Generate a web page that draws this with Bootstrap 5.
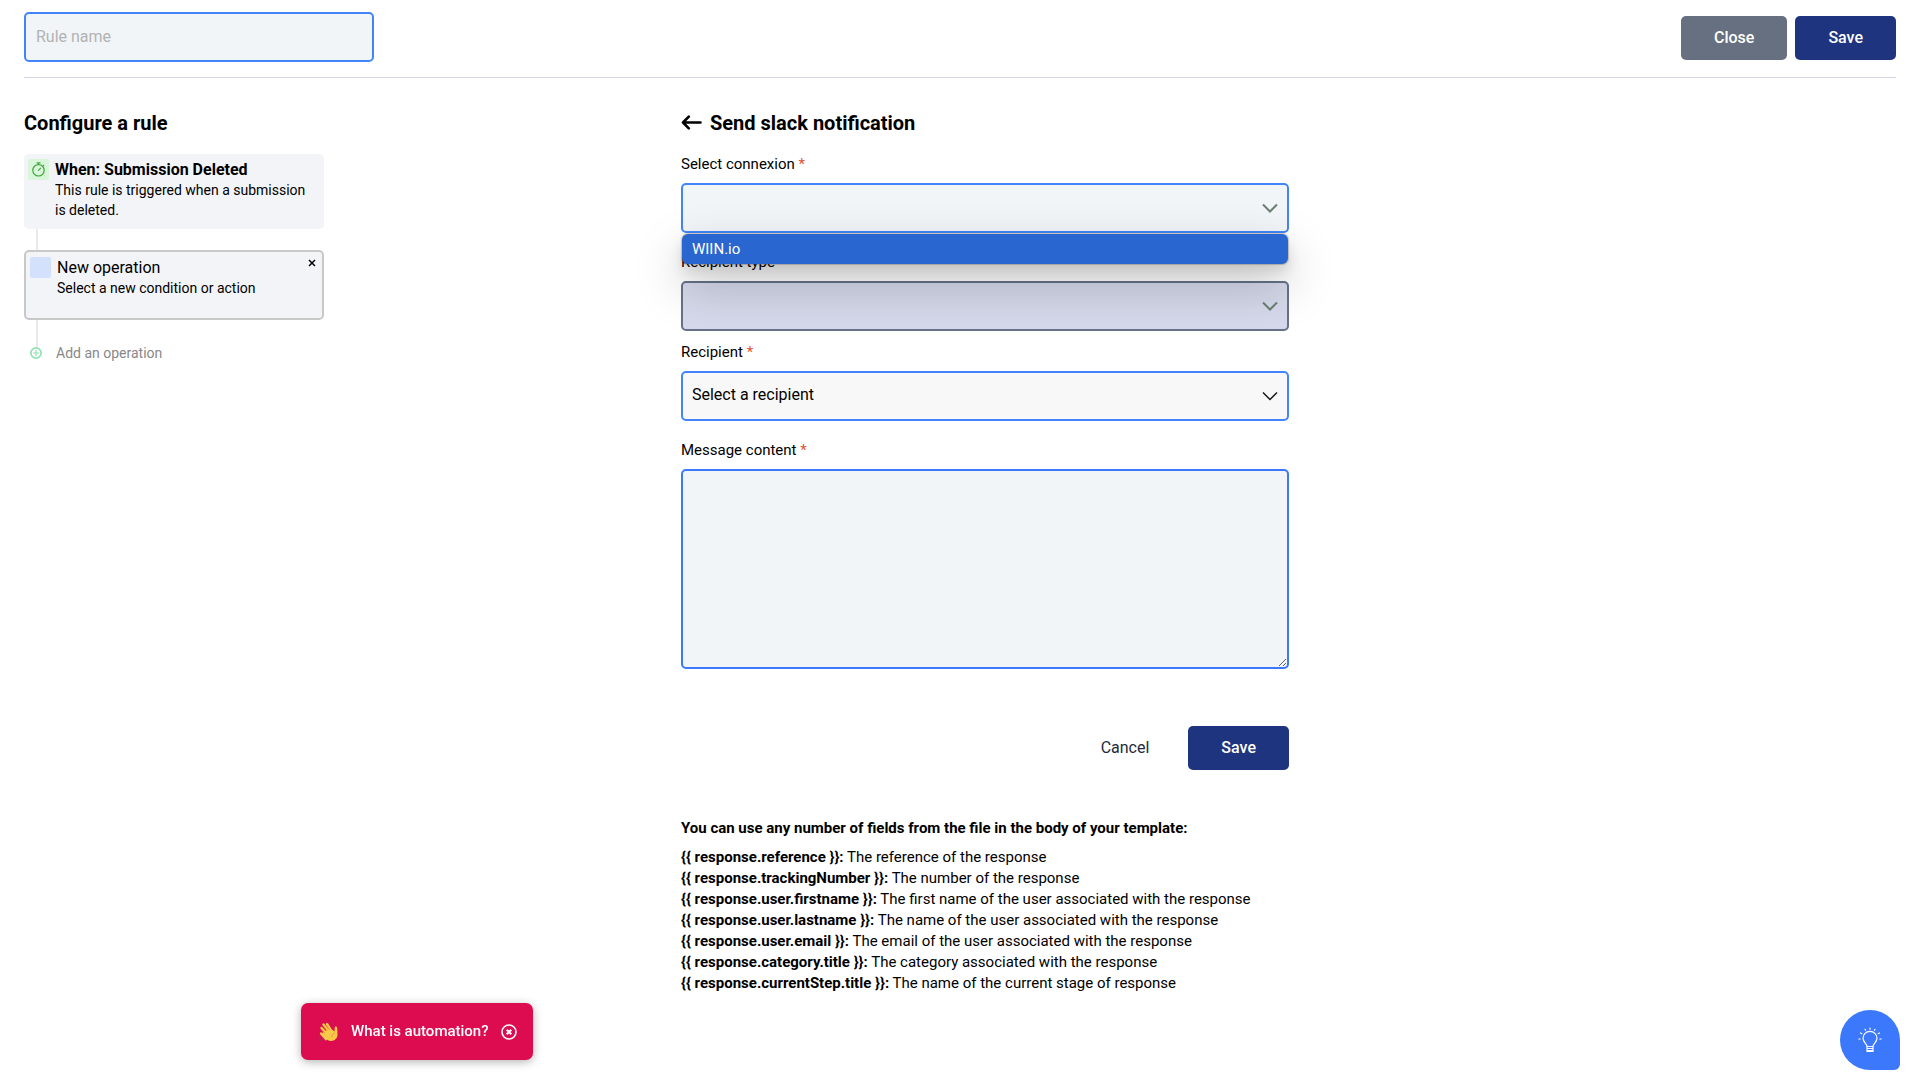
<!DOCTYPE html>
<html lang="en">
<head>
<meta charset="utf-8">
<meta name="viewport" content="width=device-width, initial-scale=1">
<title>Configure a rule</title>
<link href="https://cdn.jsdelivr.net/npm/bootstrap@5.3.0/dist/css/bootstrap.min.css" rel="stylesheet">
<style>
body { font-family: Roboto, "Liberation Sans", sans-serif; font-size: 15px; line-height: 21px; color: #000; background: #fff; }
.page-wrap { padding: 12px 24px 0; }
.top-bar { padding-bottom: 15px; border-bottom: 1px solid #d3d6e5; }
.rule-name { width: 350px; }
.field { height: 50px; padding: 0 10px 2px; font-size: 16px; color: #000; background-color: #f1f5f8; border: 2px solid #4285f9; border-radius: 5px; }
.field:focus { background-color: #f1f5f8; border-color: #4285f9; box-shadow: none; }
.field::placeholder { color: #b3b3b3; opacity: 1; }
.form-select.field { padding-left: 9px; padding-right: 40px; background-image: url("data:image/svg+xml,%3Csvg xmlns='http://www.w3.org/2000/svg' viewBox='0 0 16 16'%3E%3Cpath fill='none' stroke='%236b7f73' stroke-width='2' d='m1 4.5 7 7 7-7'/%3E%3C/svg%3E"); background-size: 16px 16px; background-position: right 9px center; }
.form-select.field:disabled { background-color: #d5d9eb; border-color: #677288; color: #000; }
.form-select.field-light { background-color: #f8f8f8; background-image: url("data:image/svg+xml,%3Csvg xmlns='http://www.w3.org/2000/svg' viewBox='0 0 16 16'%3E%3Cpath fill='none' stroke='%23111' stroke-width='1.4' d='m1 4.5 7 7 7-7'/%3E%3C/svg%3E"); }
textarea.field { height: 200px; padding: 10px; border-color: #3b78fb; }
.field-label { display: block; line-height: 22px; margin-bottom: 8px; }
.req { color: #e8502e; }
.detail-form { margin-top: 18px; }
.group-wide { margin-bottom: 18px; }
.group-tight { margin-bottom: 10px; }
.btn-app { height: 44px; padding: 0 33px; font-size: 16px; font-weight: 500; border: 0; border-radius: 5px; color: #fff; }
.btn-slate, .btn-slate:hover { background: #677080; color: #fff; }
.btn-navy, .btn-navy:hover { background: #1e347e; color: #fff; }
.btn-plain { font-weight: 400; color: #222b3a; }
.form-actions { margin-top: 57px; gap: 6px; }
.title-text { font-size: 20px; line-height: 24px; font-weight: 700; margin: 0; }
.columns { padding-top: 33px; }
.detail-col { margin-left: 25px; }
.rule-steps { width: 300px; margin-top: 19px; }
.step-box { background: #f3f4f7; border-radius: 5px; gap: 6px; }
.step-trigger { min-height: 75px; padding: 5px 16px 4px 4px; }
.step-new { min-height: 70px; padding: 5px 4px; border: 2px solid #c8c8c8; }
.step-icon { width: 21px; height: 21px; border-radius: 2px; flex: none; }
.icon-green { background: #d9f5da; }
.icon-blue { background: #d3e1fd; }
.step-name { font-size: 16px; line-height: 21px; margin: 0; }
.step-text { font-size: 14px; line-height: 20px; margin: 0; }
.step-line { width: 2px; height: 21px; margin-left: 12px; background: #e9e9ef; }
.step-line-end { height: 27px; }
.close-x { width: 12px; height: 12px; line-height: 0; }
.add-op { gap: 14px; padding-left: 6px; font-size: 14px; line-height: 12px; color: #888; }
.back-link { color: #000; line-height: 0; }
.option-pop { top: 51px; left: 1px; right: 1px; z-index: 5; background: #2a66d0; color: #fff; border-radius: 6px; font-size: 15px; line-height: 30px; padding: 0 10px; box-shadow: 0 0 1px 1px rgba(90,70,60,.3), 0 8px 14px rgba(0,0,0,.12), 0 20px 48px rgba(0,0,0,.25); }
.template-info { margin-top: 48px; font-size: 15px; }
.help-toast { left: 301px; bottom: 20px; height: 57px; padding: 0 16px 0 17px; gap: 12px; border-radius: 7px; background: #dd0c50; color: #fff; font-size: 15px; font-weight: 500; box-shadow: 0 2px 10px rgba(0,0,0,.3); }
.help-fab { right: 20px; bottom: 10px; width: 60px; height: 60px; background: #3b78fb; border-radius: 30px 30px 6px 30px; }
</style>
<script src="https://cdn.jsdelivr.net/npm/bootstrap@5.3.0/dist/js/bootstrap.bundle.min.js"></script>
</head>
<body>
<div class="page-wrap">
  <header class="top-bar d-flex justify-content-between align-items-start">
    <input type="text" class="form-control field rule-name" placeholder="Rule name" aria-label="Rule name">
    <div class="d-flex gap-2 pt-1">
      <button type="button" class="btn btn-app btn-slate">Close</button>
      <button type="button" class="btn btn-app btn-navy">Save</button>
    </div>
  </header>

  <main class="row g-0 columns">
    <section class="col-4">
      <h1 class="title-text">Configure a rule</h1>
      <div class="rule-steps">
        <div class="step-box step-trigger d-flex">
          <span class="step-icon icon-green d-flex align-items-center justify-content-center">
            <svg width="15" height="15" viewBox="0 0 15 15" fill="none" stroke="#43a53e" stroke-width="1.2" aria-hidden="true"><circle cx="7.5" cy="8.3" r="5.7"/><path d="M5.6.9h3.8M7.5 1v1.6M7.2 8.6l2.7-2.8M12 3l1 1"/></svg>
          </span>
          <div>
            <h2 class="step-name fw-bold">When: Submission Deleted</h2>
            <p class="step-text">This rule is triggered when a submission is deleted.</p>
          </div>
        </div>
        <div class="step-line"></div>
        <div class="step-box step-new d-flex">
          <span class="step-icon icon-blue"></span>
          <div class="flex-grow-1">
            <h2 class="step-name fw-normal">New operation</h2>
            <p class="step-text">Select a new condition or action</p>
          </div>
          <button type="button" class="btn p-0 border-0 close-x" aria-label="Remove operation">
            <svg width="8" height="8" viewBox="0 0 8 8" stroke="#000" stroke-width="1.5" aria-hidden="true"><path d="m1 1 6 6M7 1 1 7"/></svg>
          </button>
        </div>
        <div class="step-line step-line-end"></div>
        <a href="#" class="add-op d-flex align-items-center text-decoration-none">
          <svg width="12" height="12" viewBox="0 0 12 12" fill="none" stroke="#93e2b2" aria-hidden="true"><circle cx="6" cy="6" r="5.1" stroke-width="1.7"/><path d="M6 3v6M3 6h6" stroke-width="1.2"/></svg>
          Add an operation
        </a>
      </div>
    </section>

    <section class="col-4 px-2 detail-col">
      <div class="d-flex align-items-center gap-2">
        <a href="#" class="back-link" aria-label="Back"><svg width="21" height="16" viewBox="0 0 21 16" fill="none" stroke="#000" stroke-width="2.6" stroke-linecap="round" stroke-linejoin="round" aria-hidden="true"><path d="M19.500 7.500H2M7.800 1.700 2 7.500l5.800 5.800"/></svg></a>
        <h1 class="title-text">Send slack notification</h1>
      </div>
      <form class="detail-form">
        <div class="group-wide">
          <label class="field-label" for="connexion">Select connexion <span class="req">*</span></label>
          <div class="position-relative">
            <select id="connexion" class="form-select field"><option selected></option><option>WIIN.io</option></select>
            <div class="option-pop position-absolute">WIIN.io</div>
          </div>
        </div>
        <div class="group-tight">
          <label class="field-label" for="rtype">Recipient type</label>
          <select id="rtype" class="form-select field" disabled><option></option></select>
        </div>
        <div class="group-wide">
          <label class="field-label" for="recipient">Recipient <span class="req">*</span></label>
          <select id="recipient" class="form-select field field-light"><option>Select a recipient</option></select>
        </div>
        <label class="field-label" for="message">Message content <span class="req">*</span></label>
        <textarea id="message" class="form-control field"></textarea>
        <div class="form-actions d-flex justify-content-end">
          <button type="button" class="btn btn-app btn-plain">Cancel</button>
          <button type="button" class="btn btn-app btn-navy">Save</button>
        </div>
      </form>
      <div class="template-info">
        <p class="fw-bold mb-2">You can use any number of fields from the file in the body of your template:</p>
        <ul class="list-unstyled mb-0">
          <li><b>{{ response.reference }}:</b> The reference of the response</li>
          <li><b>{{ response.trackingNumber }}:</b> The number of the response</li>
          <li><b>{{ response.user.firstname }}:</b> The first name of the user associated with the response</li>
          <li><b>{{ response.user.lastname }}:</b> The name of the user associated with the response</li>
          <li><b>{{ response.user.email }}:</b> The email of the user associated with the response</li>
          <li><b>{{ response.category.title }}:</b> The category associated with the response</li>
          <li><b>{{ response.currentStep.title }}:</b> The name of the current stage of response</li>
        </ul>
      </div>
    </section>
  </main>
</div>

<div class="help-toast position-fixed d-flex align-items-center">
  <svg width="21" height="21" viewBox="0 0 21 21" fill="none" stroke-linecap="round" aria-hidden="true">
    <path d="M8 18.200 3 12.500M10 14 3.500 7M12 12 5.500 3.500M14 11 9 3" stroke="#fbc84a" stroke-width="2.400"/>
    <path d="M4 12 12 7l4.500 3.500.2-3.700c.2-1.800 2.400-1.500 2.500.3l.3 6.200c.2 4-3 6.700-6.500 6.700-2.500 0-4.500-1.500-6-3.500z" fill="#fbc84a"/>
    <path d="M6.500 12 4 9.300M9 9.500 6 6M11.500 8.500 8.500 4.500M14 16c-.5-2 .5-3.500 2.500-4" stroke="#d98a2b" stroke-width=".7"/>
    <path d="M1.500 15.500c.4 1.800 1.400 2.800 3 3.300M.8 17.500c.5 1.200 1.200 2 2.300 2.500M13.500 1.500c1.500.4 2.300 1.200 2.700 2.500" stroke="#8c3d62" stroke-width=".8"/>
  </svg>
  <span>What is automation?</span>
  <button type="button" class="btn p-0 border-0 d-flex" aria-label="Dismiss">
    <svg width="16" height="16" viewBox="0 0 16 16" fill="none" stroke="#fff" aria-hidden="true"><circle cx="8" cy="8" r="7" stroke-width="1.600"/><path d="m5.700 5.700 4.600 4.600M10.300 5.700l-4.600 4.600" stroke-width="2"/></svg>
  </button>
</div>

<button type="button" class="btn p-0 border-0 help-fab position-fixed d-flex align-items-center justify-content-center" aria-label="Help">
  <svg width="24" height="26" viewBox="0 0 24 26" fill="none" stroke="#fff" stroke-width="1.200" stroke-linecap="round" aria-hidden="true"><path d="M9 19.500c0-3-4-4.200-4-8.200a7 7 0 0 1 14 0c0 4-4 5.200-4 8.200zM9 21.500h6M9 23.500h6M9 19.500v5h6v-5M12 1v1.300M7 2.300l.6 1M17 2.300l-.6 1M2.500 6l1.300.7M21.500 6l-1.300.7M.8 12h1.400M21.800 12h1.400"/></svg>
</button>
</body>
</html>
